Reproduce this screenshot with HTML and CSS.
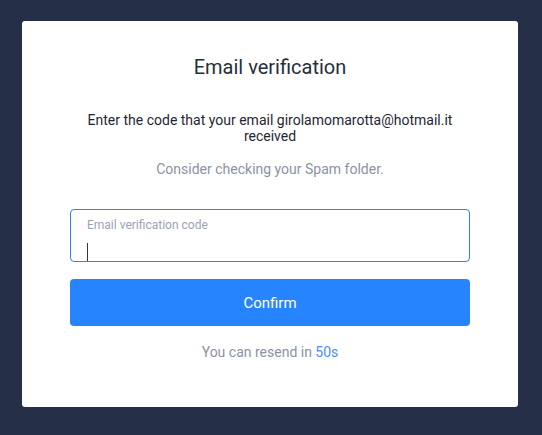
FILE: index.html
```html
<!DOCTYPE html>
<html lang="en">
<head>
    <meta charset="UTF-8">
    <meta name="viewport" content="width=device-width, initial-scale=1.0">
    <title>Email verification</title>
    <link rel="stylesheet" href="styles.css">
</head>
<body>
    <div class="card">
        <h2>Email verification</h2>
        <p class="info">Enter the code that your email girolamomarotta@hotmail.it received</p>
        <p class="hint">Consider checking your Spam folder.</p>
        <div class="field">
            <label for="code">Email verification code</label>
            <div class="caret"></div>
        </div>
        <button>Confirm</button>
        <p class="resend">You can resend in <span>50s</span></p>
    </div>
</body>
</html>
```

FILE: styles.css
```css
body {
    font-family: Roboto, "Liberation Sans", sans-serif;
    background-color: #252f48;
    margin: 0;
    padding: 21px 24px 28px 22px;
}
.card {
    background: white;
    border-radius: 3px;
    height: 386px;
    box-sizing: border-box;
    padding: 33px 48px 0;
    text-align: center;
}
h2 {
    margin: 0;
    font-size: 20px;
    font-weight: 400;
    color: #252f3d;
    line-height: 26px;
}
.info {
    margin: 32px 0 0;
    font-size: 14px;
    line-height: 16px;
    color: #1f2633;
}
.hint {
    margin: 17px 0 0;
    font-size: 14px;
    line-height: 16px;
    color: #8a93a3;
}
.field {
    margin-top: 32px;
    height: 53px;
    box-sizing: border-box;
    border: 1px solid #2684ff;
    border-radius: 4px;
    padding: 8px 16px 0;
    text-align: left;
}
.field label {
    display: block;
    font-size: 12px;
    line-height: 14px;
    color: #9ba3b2;
}
.caret {
    margin-top: 11px;
    width: 1px;
    height: 18px;
    background: #1f3a66;
}
button {
    display: block;
    margin-top: 17px;
    width: 100%;
    height: 47px;
    background: #2684ff;
    color: white;
    border: none;
    border-radius: 4px;
    font-family: inherit;
    font-size: 15px;
}
.resend {
    margin: 18px 0 0;
    font-size: 14px;
    line-height: 16px;
    color: #8a93a3;
}
.resend span {
    color: #4b8ef5;
}
```
